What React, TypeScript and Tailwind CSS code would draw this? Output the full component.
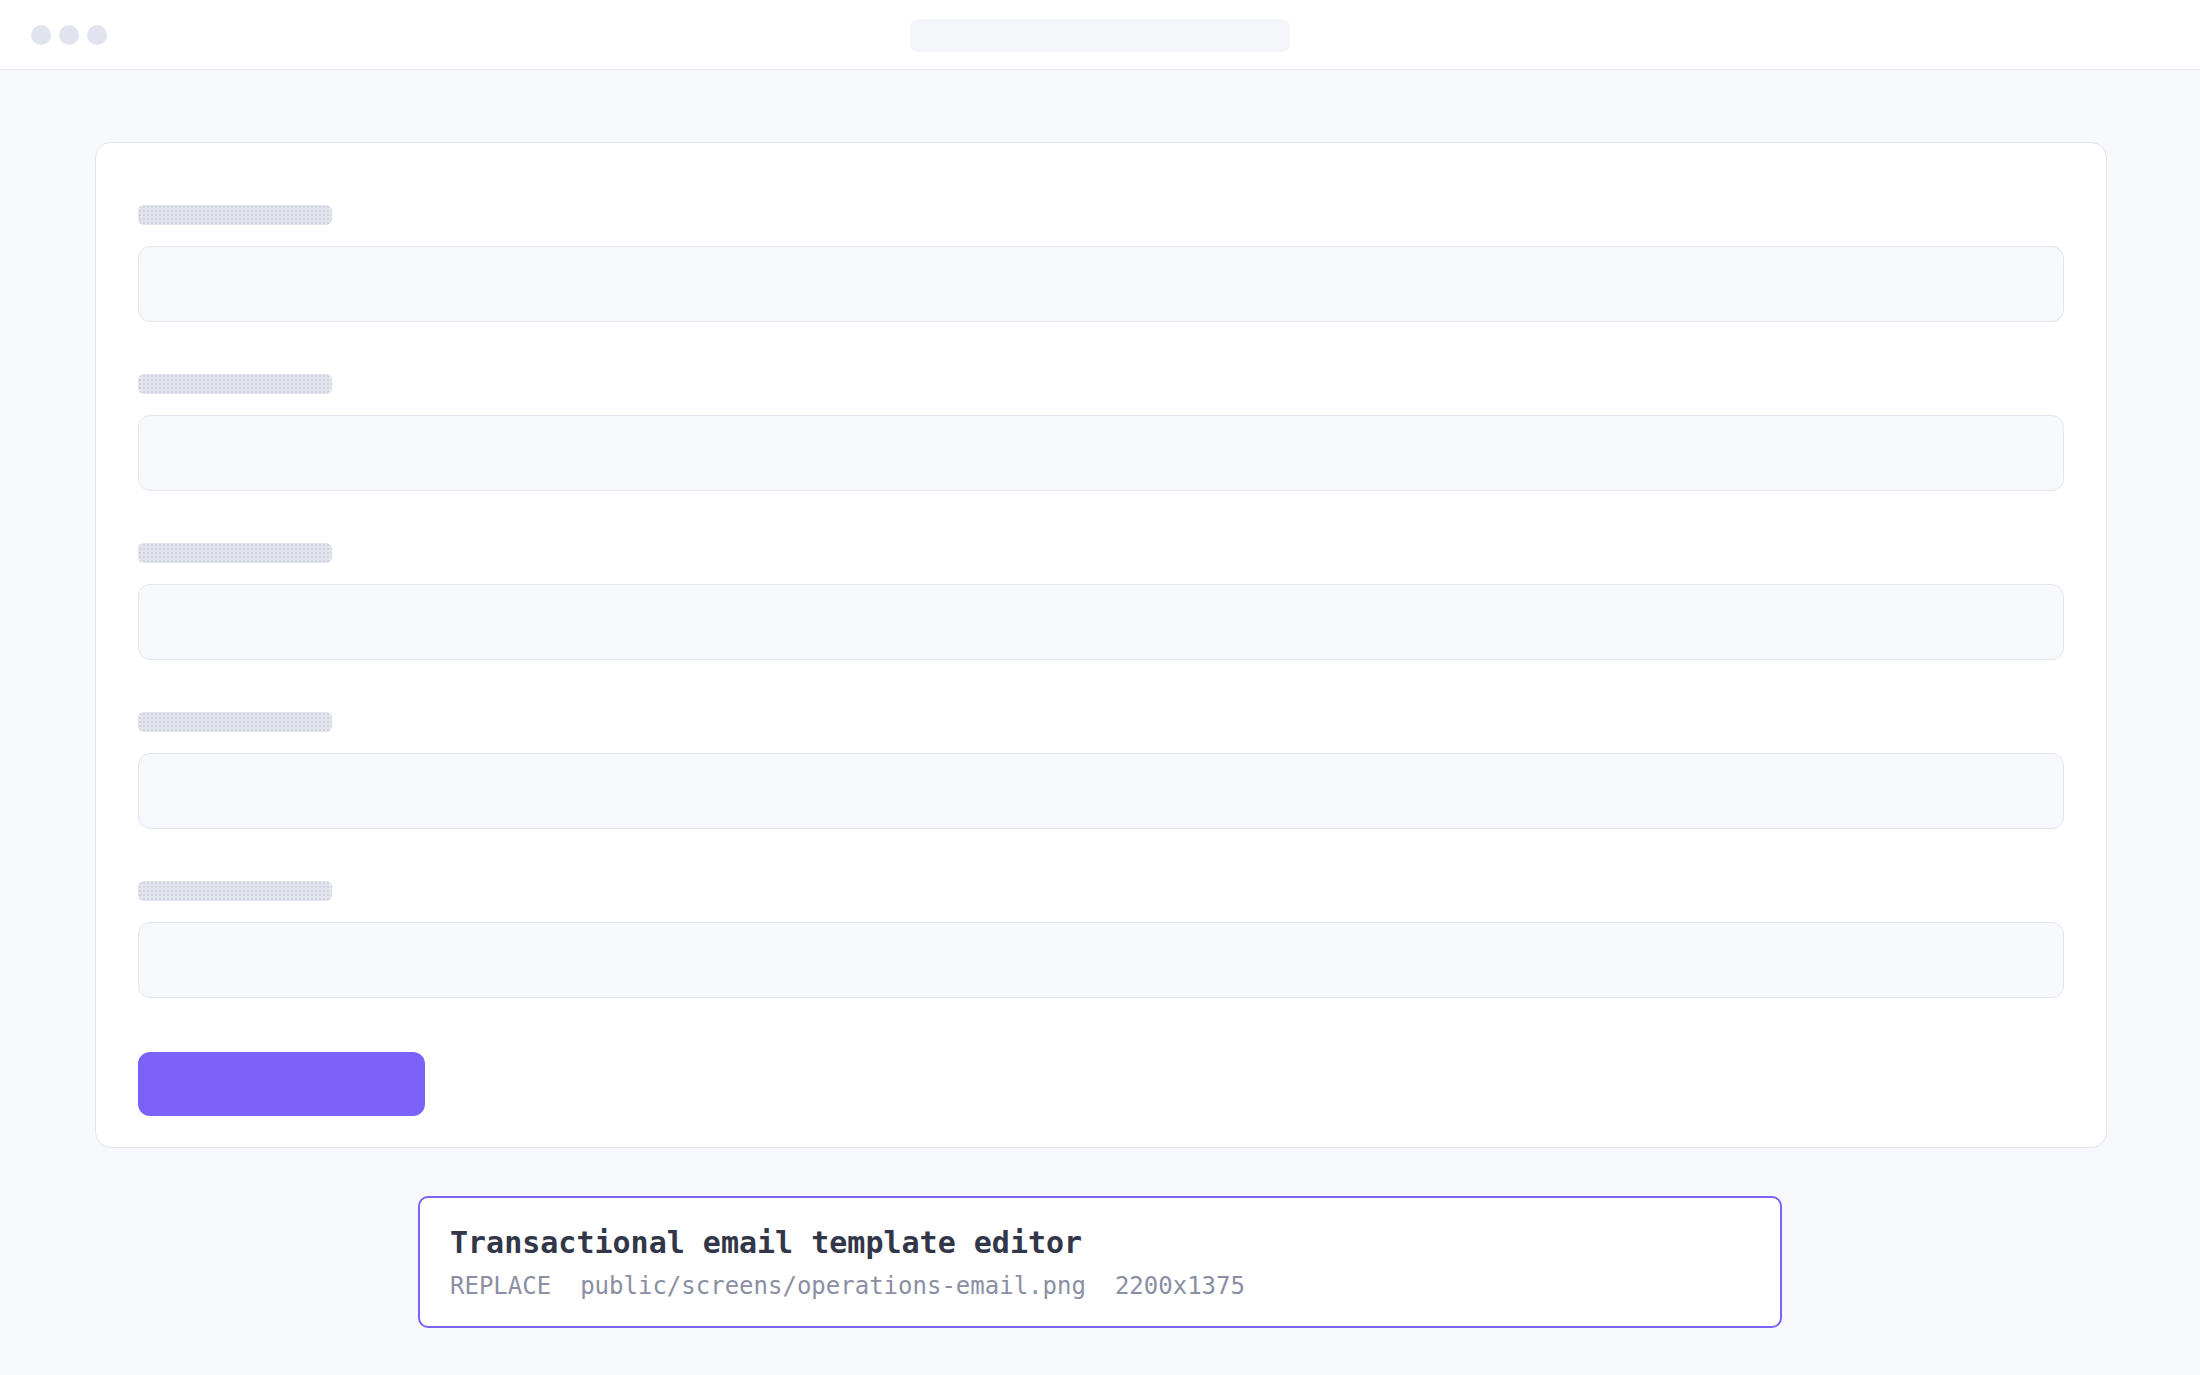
import React from 'react';

const fields = ['name', 'subject', 'sender', 'reply', 'body'];

const Field = () => (
  <div className="flex flex-col gap-[21px]">
    <div className="h-[20px] w-[194px] rounded-[6px] bg-[#e2e4ee] bg-[radial-gradient(circle,#cfd2de_0.7px,transparent_0.9px)] bg-[length:4px_4px]" />
    <div className="h-[76px] w-full rounded-[12px] border border-[#e3e5ef] bg-[#f7f8fc]" />
  </div>
);

const App = () => {
  return (
    <div className="min-h-screen w-full bg-[#f7f8fc]" style={{ fontFamily: '"DejaVu Sans Mono", "Liberation Mono", monospace' }}>
      <header className="relative flex h-[70px] items-center border-b border-[#e3e5ef] bg-white px-[31px]">
        <div className="flex gap-2">
          <span className="h-5 w-5 rounded-full bg-[#e1e3ee]" />
          <span className="h-5 w-5 rounded-full bg-[#e1e3ee]" />
          <span className="h-5 w-5 rounded-full bg-[#e1e3ee]" />
        </div>
        <div className="absolute left-1/2 top-[19px] h-[33px] w-[380px] -translate-x-1/2 rounded-[8px] bg-[#f5f6fa]" />
      </header>

      <main className="flex flex-col items-center pt-[72px] pb-12">
        <div className="w-full pl-[95px] pr-[93px]">
          <section className="flex flex-col rounded-[16px] border border-[#e3e5ef] bg-white px-[42px] pt-[62px] pb-[31px]">
            <div className="flex flex-col gap-[52px]">
              {fields.map(f => (
                <Field key={f} />
              ))}
            </div>
            <button className="mt-[54px] h-[64px] w-[287px] rounded-[12px] bg-[#7b61f8]" />
          </section>
        </div>

        <div className="mt-[48px] w-[1364px] rounded-[10px] border-2 border-[#7c62f6] bg-white px-[30px] pt-[27px] pb-[25px]">
          <h1 className="text-[30px] font-bold leading-[36px] text-[#323649]">
            Transactional email template editor
          </h1>
          <p className="mt-[10px] flex gap-[29px] text-[24px] leading-[30px] text-[#8a8fa3]">
            <span>REPLACE</span>
            <span>public/screens/operations-email.png</span>
            <span>2200x1375</span>
          </p>
        </div>
      </main>
    </div>
  );
};

export default App;
